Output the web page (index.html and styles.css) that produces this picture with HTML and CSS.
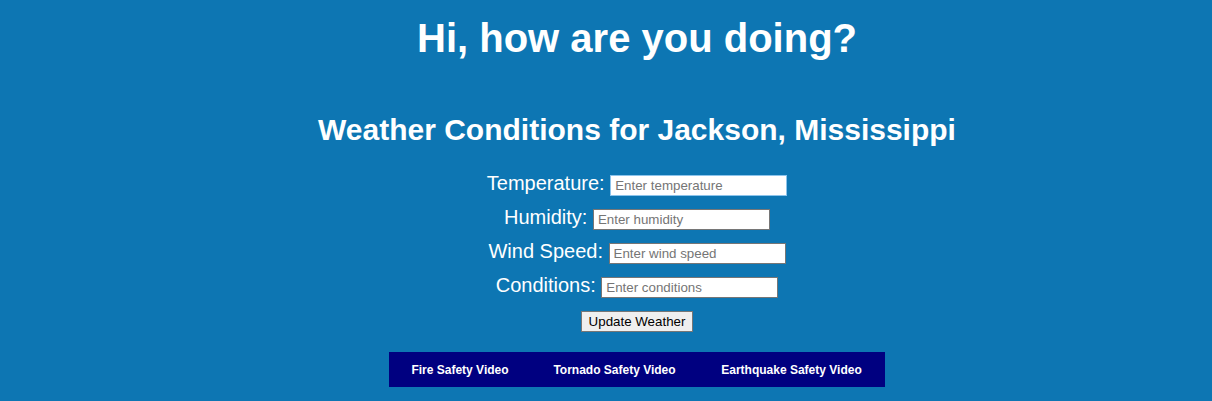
FILE: index.html
```html
<!DOCTYPE html>
<html lang="en">
<head>
<meta charset="utf-8">
<title>Weather</title>
<link rel="stylesheet" href="styles.css">
</head>
<body>
<main class="page">
  <h1 class="greeting">Hi, how are you doing?</h1>
  <h2 class="title">Weather Conditions for Jackson, Mississippi</h2>
  <form class="weather-form">
    <div class="row"><label class="lbl" for="t">Temperature:</label> <input class="field field-active" id="t" type="text" placeholder="Enter temperature"></div>
    <div class="row"><label class="lbl" for="h">Humidity:</label> <input class="field" id="h" type="text" placeholder="Enter humidity"></div>
    <div class="row"><label class="lbl" for="w">Wind Speed:</label> <input class="field" id="w" type="text" placeholder="Enter wind speed"></div>
    <div class="row"><label class="lbl" for="c">Conditions:</label> <input class="field" id="c" type="text" placeholder="Enter conditions"></div>
    <div class="btn-row"><button class="btn" type="button">Update Weather</button></div>
  </form>
  <nav class="nav">
    <a class="nav-link nav-fire" href="#">Fire Safety Video</a>
    <a class="nav-link nav-tornado" href="#">Tornado Safety Video</a>
    <a class="nav-link nav-quake" href="#">Earthquake Safety Video</a>
  </nav>
</main>
</body>
</html>
```
FILE: styles.css
```css
html, body {
  margin: 0;
  padding: 0;
}
body {
  background: #0d76b3;
  color: #ffffff;
  font-family: "Liberation Sans", Arial, sans-serif;
  height: 401px;
  overflow: hidden;
}
.page {
  margin-left: 62px;
  display: flex;
  flex-direction: column;
  align-items: center;
}
.greeting {
  margin: 15px 0 0;
  font-size: 40px;
  line-height: 46px;
  font-weight: bold;
}
.title {
  margin: 52px 0 0;
  font-size: 30px;
  line-height: 34px;
  font-weight: bold;
}
.weather-form {
  margin-top: 25px;
  display: flex;
  flex-direction: column;
  align-items: center;
}
.row {
  height: 34px;
  font-size: 20px;
  line-height: 23px;
  text-align: center;
}
.field {
  box-sizing: border-box;
  width: 177px;
  height: 21px;
  margin: 0;
  padding: 1px 4px;
  border: 1px solid #767676;
  background: #ffffff;
  font-family: "Liberation Sans", Arial, sans-serif;
  font-size: 13.33px;
  color: #000;
  outline: none;
}
.field::placeholder {
  color: #757575;
}
.field-active {
  border-color: #8cc4ec;
}
.btn-row {
  margin-top: 3px;
  height: 21px;
}
.btn {
  box-sizing: border-box;
  height: 21px;
  padding: 1px 7px;
  margin: 0;
  border: 1px solid #767676;
  border-radius: 0;
  background: #efefef;
  color: #000;
  font-family: "Liberation Sans", Arial, sans-serif;
  font-size: 13.33px;
}
.nav {
  margin-top: 20px;
  background: #000080;
  height: 35px;
  display: flex;
  align-items: center;
}
.nav-link {
  color: #ffffff;
  text-decoration: none;
  font-size: 12px;
  font-weight: bold;
  text-align: center;
}
.nav-fire {
  width: 142px;
}
.nav-tornado {
  width: 167px;
}
.nav-quake {
  width: 187px;
}
```
